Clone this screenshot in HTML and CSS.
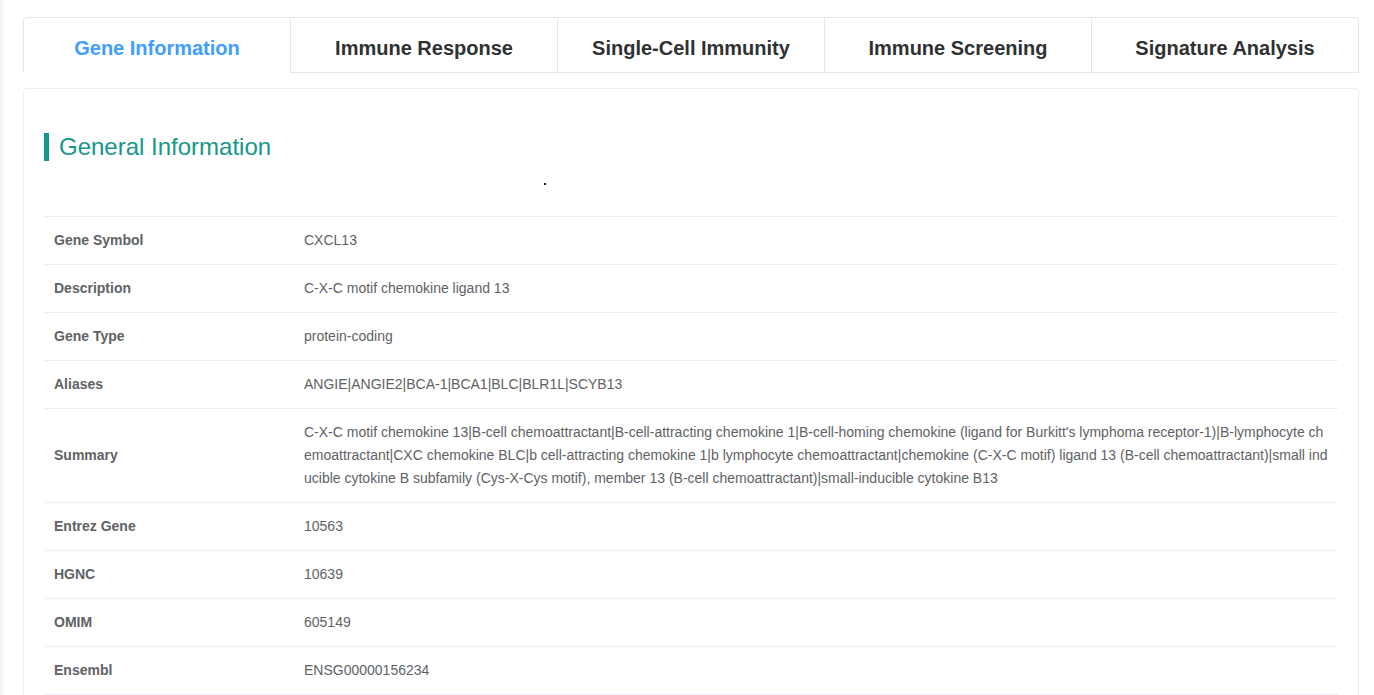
FILE: index.html
```html
<!DOCTYPE html>
<html>
<head>
<meta charset="utf-8">
<link rel="stylesheet" href="styles.css">
</head>
<body>
<div class="page">
  <div class="tabs">
    <div class="tab active">Gene Information</div>
    <div class="tab">Immune Response</div>
    <div class="tab">Single-Cell Immunity</div>
    <div class="tab">Immune Screening</div>
    <div class="tab">Signature Analysis</div>
  </div>
  <div class="card">
    <h2 class="section-title">General Information</h2>
    <div class="dot-row"><span class="dot"></span></div>
    <table class="info">
      <tr><th>Gene Symbol</th><td>CXCL13</td></tr>
      <tr><th>Description</th><td>C-X-C motif chemokine ligand 13</td></tr>
      <tr><th>Gene Type</th><td>protein-coding</td></tr>
      <tr><th>Aliases</th><td>ANGIE|ANGIE2|BCA-1|BCA1|BLC|BLR1L|SCYB13</td></tr>
      <tr><th>Summary</th><td class="wrap">C-X-C motif chemokine 13|B-cell chemoattractant|B-cell-attracting chemokine 1|B-cell-homing chemokine (ligand for Burkitt's lymphoma receptor-1)|B-lymphocyte chemoattractant|CXC chemokine BLC|b cell-attracting chemokine 1|b lymphocyte chemoattractant|chemokine (C-X-C motif) ligand 13 (B-cell chemoattractant)|small inducible cytokine B subfamily (Cys-X-Cys motif), member 13 (B-cell chemoattractant)|small-inducible cytokine B13</td></tr>
      <tr><th>Entrez Gene</th><td>10563</td></tr>
      <tr><th>HGNC</th><td>10639</td></tr>
      <tr><th>OMIM</th><td>605149</td></tr>
      <tr><th>Ensembl</th><td>ENSG00000156234</td></tr>
    </table>
  </div>
</div>
</body>
</html>
```

FILE: styles.css
```css
html, body {
  margin: 0;
  padding: 0;
  background: #ffffff;
}
body {
  font-family: "Liberation Sans", Arial, sans-serif;
  border-left: 3px solid #f3f3f6;
  min-height: 695px;
  box-sizing: border-box;
}
.page {
  padding: 17px 15px 0 20px;
}
.tabs {
  display: flex;
  width: 1336px;
  height: 56px;
  box-sizing: border-box;
  border: 1px solid #e4e7ed;
  border-bottom: none;
  border-radius: 4px 4px 0 0;
}
.tab {
  flex: 1;
  display: flex;
  align-items: center;
  justify-content: center;
  padding-top: 6px;
  font-size: 20px;
  font-weight: bold;
  color: #303133;
  border-left: 1px solid #e4e7ed;
  border-bottom: 1px solid #e4e7ed;
}
.tab:first-child {
  border-left: none;
}
.tab.active {
  color: #409eff;
  border-bottom-color: transparent;
}
.card {
  margin-top: 15px;
  width: 1336px;
  box-sizing: border-box;
  border: 1px solid #ebeef5;
  border-radius: 4px;
  padding: 44px 20px 0 20px;
  min-height: 620px;
}
.section-title {
  margin: 0;
  height: 28px;
  line-height: 28px;
  border-left: 5px solid #16978a;
  padding-left: 10px;
  font-size: 24px;
  font-weight: normal;
  color: #16978a;
}
.dot-row {
  height: 55px;
  position: relative;
}
.dot {
  position: absolute;
  left: 500px;
  top: 22px;
  width: 2px;
  height: 2px;
  background: #222;
}
.info {
  width: 100%;
  border-collapse: collapse;
  font-size: 14px;
  color: #606266;
}
.info tr {
  border-top: 1px solid #ebeef5;
  border-bottom: 1px solid #ebeef5;
}
.info th, .info td {
  padding: 12px 10px;
  line-height: 23px;
  text-align: left;
  vertical-align: middle;
}
.info th {
  width: 230px;
  font-weight: bold;
}
.info td.wrap {
  word-break: break-all;
}
```
